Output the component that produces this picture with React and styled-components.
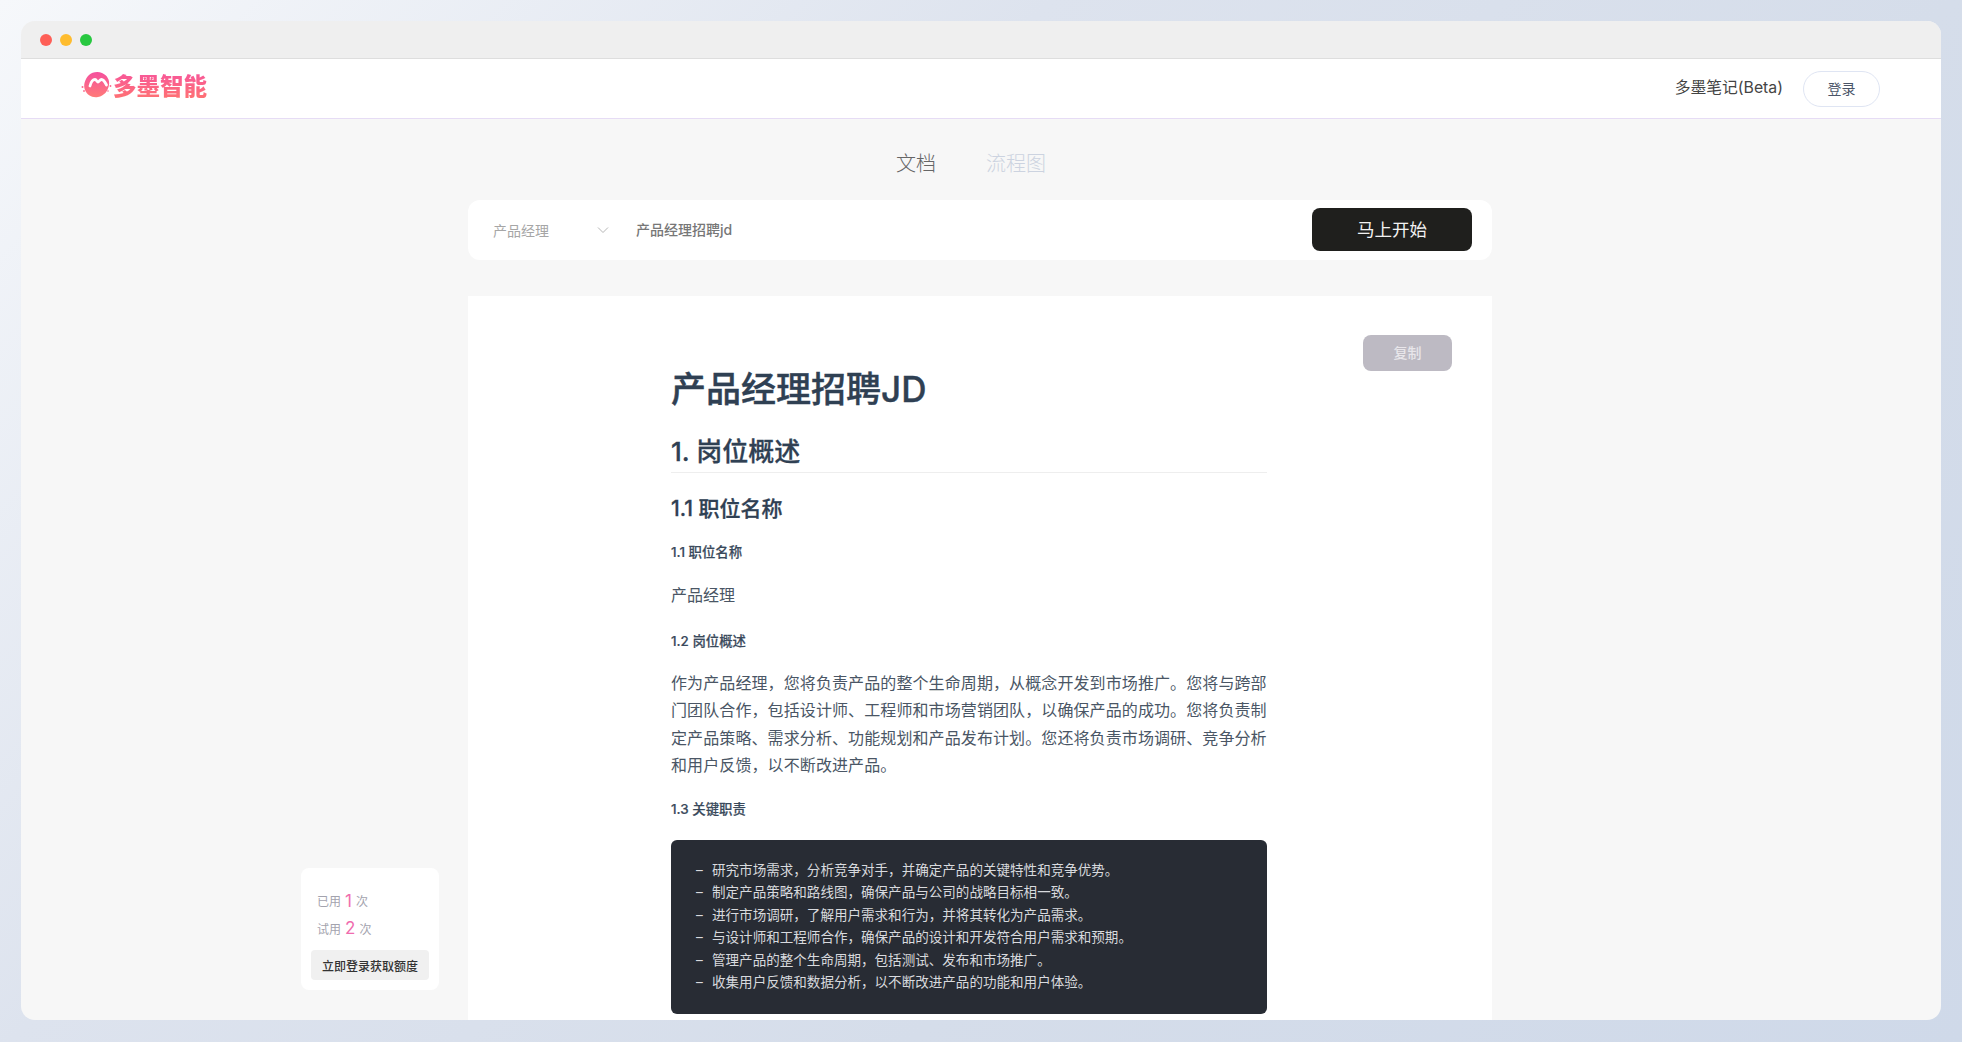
import React from "react";
import styled, { createGlobalStyle } from "styled-components";

const Global = createGlobalStyle`
  html, body { margin: 0; padding: 0; height: 100%; overflow: hidden; }
  body {
    font-family: Inter, "Noto Sans CJK SC", sans-serif;
    background: linear-gradient(135deg, #f6f8fb 0%, #dde3ee 35%, #d5ddea 65%, #cfd9e9 100%);
  }
  * { box-sizing: border-box; }
`;

const Page = styled.div`
  width: 1962px;
  height: 1042px;
  padding: 21px;
`;
const Win = styled.div`
  position: relative;
  width: 1920px;
  height: 999px;
  border-radius: 14px;
  overflow: hidden;
  background: #f7f7f7;
  display: flex;
  flex-direction: column;
`;
const TitleBar = styled.div`
  height: 38px;
  flex: none;
  background: #efefef;
  border-bottom: 1px solid #dedede;
  display: flex;
  align-items: center;
  gap: 8px;
  padding: 0 0 0 19px;
`;
const Dot = styled.span`
  width: 12px;
  height: 12px;
  border-radius: 50%;
  background: ${(p) => p.$c};
`;
const Header = styled.header`
  height: 60px;
  flex: none;
  background: #fff;
  border-bottom: 1px solid #e6dcf5;
  display: flex;
  align-items: center;
  justify-content: space-between;
  padding: 0 61px 0 60px;
`;
const Logo = styled.div`
  display: flex;
  align-items: center;
  gap: 1px;
  margin-bottom: 8px;
`;
const LogoText = styled.span`
  font-family: "Noto Sans CJK SC", sans-serif;
  font-weight: 900;
  font-size: 23.5px;
  line-height: 28px;
  background: linear-gradient(180deg, #f7559c 0%, #ff7272 100%);
  -webkit-background-clip: text;
  background-clip: text;
  color: transparent;
`;
const HeadRight = styled.div`
  display: flex;
  align-items: center;
  gap: 20px;
`;
const HeadLink = styled.span`
  font-size: 15.8px;
  line-height: 22px;
  margin-bottom: 2px;
  color: #444;
`;
const Login = styled.button`
  width: 77px;
  height: 36px;
  border-radius: 18px;
  border: 1px solid #dfe5f3;
  background: #fff;
  font: inherit;
  font-size: 14px;
  color: #4a5568;
  padding: 0 0 2px;
`;
const Tabs = styled.div`
  display: flex;
  justify-content: center;
  gap: 50px;
  padding: 30px 20px 21px 0;
`;
const Tab = styled.span`
  font-size: 20px;
  line-height: 30px;
  font-weight: 300;
  color: ${(p) => (p.$active ? "#666" : "#ccd3e0")};
`;
const Center = styled.main`
  width: 1024px;
  margin-left: 447px;
  display: flex;
  flex-direction: column;
  gap: 36px;
  flex: 1;
  min-height: 0;
`;
const Bar = styled.div`
  height: 60px;
  flex: none;
  background: #fff;
  border-radius: 12px;
  display: flex;
  align-items: center;
  padding: 0 20px 0 25px;
`;
const Select = styled.div`
  width: 143px;
  display: flex;
  align-items: center;
  padding-bottom: 1px;
  font-size: 14px;
  color: #a6a6a6;
`;
const SelectChevron = styled.span`
  display: flex;
  margin-left: 48px;
`;
const Query = styled.div`
  flex: 1;
  font-size: 14px;
  font-weight: 500;
  padding-bottom: 2px;
  color: #777;
`;
const Start = styled.button`
  width: 160px;
  height: 43px;
  margin-bottom: 1px;
  border: none;
  border-radius: 8px;
  background: #1f1f1d;
  color: #f2f2f2;
  font: inherit;
  font-size: 17.5px;
  padding: 0 0 3px;
`;
const Card = styled.section`
  position: relative;
  flex: 1;
  min-height: 0;
  background: #fff;
  padding: 69px 0 0 203px;
  overflow: hidden;
`;
const Copy = styled.button`
  position: absolute;
  top: 39px;
  right: 40px;
  width: 89px;
  height: 36px;
  border: none;
  border-radius: 8px;
  background: #bdbac3;
  color: #e8e6ea;
  font: inherit;
  font-size: 14px;
  font-weight: 500;
  padding: 0 0 2px;
`;
const Doc = styled.article`
  width: 596px;
  color: #2f4053;
`;
const H1 = styled.h1`
  margin: 0 0 23px;
  font-size: 35px;
  line-height: 48px;
  font-weight: 500;
  -webkit-text-stroke: 0.4px #2f4053;
  color: #2f4053;
`;
const H2 = styled.h2`
  margin: 0 0 22px;
  font-size: 26px;
  line-height: 32px;
  padding-bottom: 4px;
  font-weight: 500;
  -webkit-text-stroke: 0.3px #2f4053;
  border-bottom: 1px solid #eee;
  color: #2f4053;
`;
const H3 = styled.h3`
  margin: 0 0 19px;
  font-size: 21px;
  line-height: 28px;
  font-weight: 500;
  -webkit-text-stroke: 0.3px #2f4053;
  color: #2f4053;
`;
const H5 = styled.h5`
  margin: 0 0 ${(p) => p.$after}px;
  font-size: 13.4px;
  line-height: 20px;
  font-weight: 500;
  -webkit-text-stroke: 0.2px #3a4a5c;
  color: #3a4a5c;
`;
const P = styled.p`
  margin: 0 0 ${(p) => p.$after}px;
  font-size: 16px;
  line-height: 27.5px;
  color: #4a5665;
  letter-spacing: ${(p) => p.$ls || 0}px;
`;
const Pre = styled.div`
  background: #282c34;
  border-radius: 6px;
  padding: 19.5px 0 20.5px 25px;
`;
const CodeLine = styled.div`
  display: flex;
  font-size: 13.55px;
  line-height: 22.4px;
  color: #d8dade;
`;
const Dash = styled.span`
  width: 16px;
  flex: none;
`;
const Quota = styled.aside`
  position: absolute;
  left: 280px;
  top: 847px;
  width: 138px;
  height: 122px;
  background: #fff;
  border-radius: 8px;
  padding: 19px 10px 0;
`;
const QuotaRow = styled.div`
  height: 27.5px;
  padding-left: 6px;
  display: flex;
  align-items: center;
  gap: 4px;
  font-size: 12px;
  color: #a3a3ae;
`;
const Num = styled.span`
  font-size: 17px;
  color: #f06cae;
`;
const QuotaBtn = styled.button`
  width: 118px;
  height: 30px;
  margin-top: 8px;
  border: none;
  border-radius: 4px;
  background: #f0f0f0;
  color: #333;
  font: inherit;
  font-size: 12px;
  font-weight: 500;
  padding: 0;
`;

const lines = [
  "研究市场需求，分析竞争对手，并确定产品的关键特性和竞争优势。",
  "制定产品策略和路线图，确保产品与公司的战略目标相一致。",
  "进行市场调研，了解用户需求和行为，并将其转化为产品需求。",
  "与设计师和工程师合作，确保产品的设计和开发符合用户需求和预期。",
  "管理产品的整个生命周期，包括测试、发布和市场推广。",
  "收集用户反馈和数据分析，以不断改进产品的功能和用户体验。",
];

function LogoMark() {
  return (
    <svg width="31" height="28" viewBox="0 0 31 28">
      <defs>
        <linearGradient id="lg" x1="0" y1="0" x2="0" y2="1">
          <stop offset="0" stopColor="#f5509e" />
          <stop offset="1" stopColor="#ff7a78" />
        </linearGradient>
      </defs>
      <path d="M8 4 C11 1 17 0 21 2 C26 4 29 9 28 14 C27 20 23 25 17 26 C11 27 6 24 4 19 C2 14 4 8 8 4 Z" fill="url(#lg)" />
      <path d="M9 15 C10 11 12 8.500 14 8.500 C15.500 8.500 16 11 17 11 C18 11 19 8.500 20.500 8.500 C22.500 8.500 24 11 25.500 14" fill="none" stroke="#fff" strokeWidth="2.800" strokeLinecap="round" strokeLinejoin="round" />
      <circle cx="1.500" cy="16" r="1" fill="#fb6a8e" />
      <circle cx="3" cy="20" r="0.900" fill="#fb6a8e" />
      <circle cx="29.500" cy="15" r="0.900" fill="#fb6a8e" />
      <circle cx="27" cy="20" r="0.800" fill="#fb6a8e" />
    </svg>
  );
}

function Chevron() {
  return (
    <svg width="12" height="8" viewBox="0 0 12 8" fill="none" stroke="#b5b5b5" strokeWidth="1">
      <path d="M1 1.500 L6 6.500 L11 1.500" />
    </svg>
  );
}

export default function App() {
  return (
    <Page>
      <Global />
      <Win>
        <TitleBar>
          <Dot $c="#fe5f57" />
          <Dot $c="#febc2e" />
          <Dot $c="#28c840" />
        </TitleBar>
        <Header>
          <Logo>
            <LogoMark />
            <LogoText>多墨智能</LogoText>
          </Logo>
          <HeadRight>
            <HeadLink>多墨笔记(Beta)</HeadLink>
            <Login>登录</Login>
          </HeadRight>
        </Header>
        <Tabs>
          <Tab $active>文档</Tab>
          <Tab>流程图</Tab>
        </Tabs>
        <Center>
          <Bar>
            <Select>
              产品经理
              <SelectChevron>
                <Chevron />
              </SelectChevron>
            </Select>
            <Query>产品经理招聘jd</Query>
            <Start>马上开始</Start>
          </Bar>
          <Card>
            <Copy>复制</Copy>
            <Doc>
              <H1>产品经理招聘JD</H1>
              <H2>1. 岗位概述</H2>
              <H3>1.1 职位名称</H3>
              <H5 $after={20}>1.1 职位名称</H5>
              <P $after={21}>产品经理</P>
              <H5 $after={19}>1.2 岗位概述</H5>
              <P $after={19} $ls={0.1}>
                作为产品经理，您将负责产品的整个生命周期，从概念开发到市场推广。您将与跨部门团队合作，包括设计师、工程师和市场营销团队，以确保产品的成功。您将负责制定产品策略、需求分析、功能规划和产品发布计划。您还将负责市场调研、竞争分析和用户反馈，以不断改进产品。
              </P>
              <H5 $after={21}>1.3 关键职责</H5>
              <Pre>
                {lines.map((l) => (
                  <CodeLine key={l}>
                    <Dash>–</Dash>
                    <span>{l}</span>
                  </CodeLine>
                ))}
              </Pre>
            </Doc>
          </Card>
        </Center>
        <Quota>
          <QuotaRow>
            已用 <Num>1</Num> 次
          </QuotaRow>
          <QuotaRow>
            试用 <Num>2</Num> 次
          </QuotaRow>
          <QuotaBtn>立即登录获取额度</QuotaBtn>
        </Quota>
      </Win>
    </Page>
  );
}
